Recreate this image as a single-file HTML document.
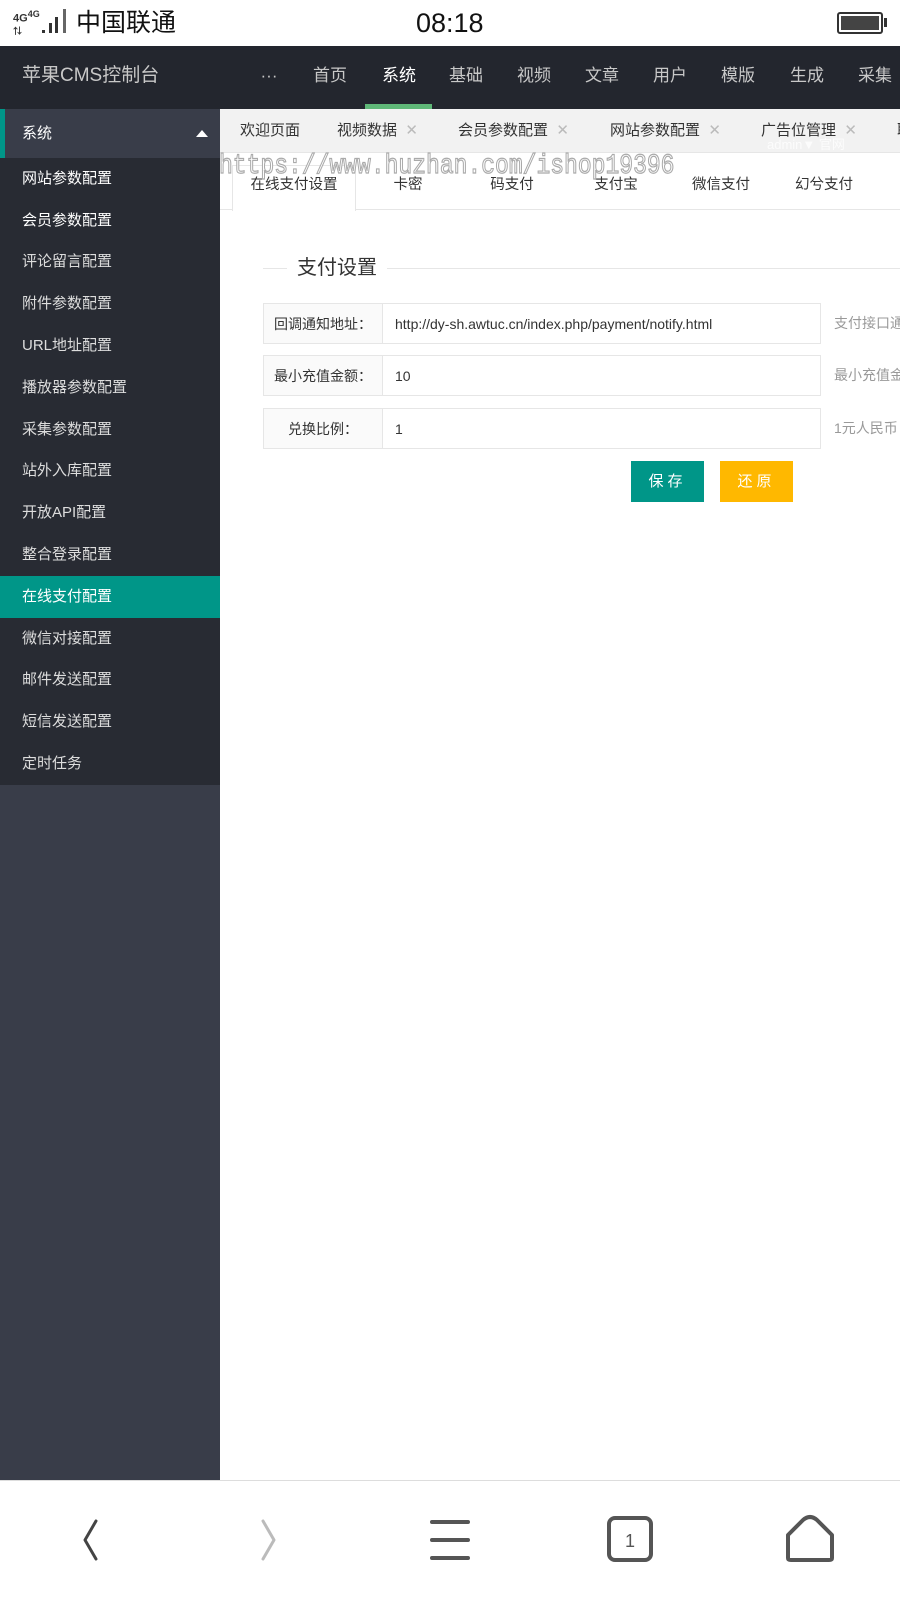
<!DOCTYPE html>
<html><head><meta charset="utf-8">
<style>
*{margin:0;padding:0;box-sizing:border-box}
body{width:900px;height:1600px;overflow:hidden;background:#fff;font-family:"Liberation Sans","Noto Sans CJK SC",sans-serif;position:relative}
.a{position:absolute;white-space:nowrap}
.nav{top:46px;left:0;width:900px;height:63px;background:#23262e}
.nv{top:46px;height:63px;line-height:60px;font-size:17px;color:#c8c8c8;transform:translateX(-50%)}
.side{top:109px;left:0;width:220px;height:1371px;background:#393d49}
.si{left:0;width:220px;height:42px;line-height:42px;padding-left:22px;font-size:15px;color:#ddd;background:#282b33}
.tab{top:109px;height:44px;line-height:44px;font-size:15px;color:#333}
.x{color:#bbb;font-size:15px}
.st{top:161px;height:49px;line-height:49px;font-size:14.5px;color:#333;transform:translateX(-50%)}
.lb{left:263px;width:120px;height:41px;line-height:41px;background:#fafafa;border:1px solid #e6e6e6;font-size:14px;color:#333;text-align:center}
.in{left:382px;width:439px;height:41px;line-height:41px;border:1px solid #e6e6e6;padding-left:12px;font-size:14px;color:#333}
.hp{left:834px;font-size:14px;color:#999;line-height:41px}
</style></head><body>
<!-- status bar -->
<div class="a" style="left:13px;top:8px;font-size:11px;font-weight:bold;color:#333;line-height:12px">4G<sup style="font-size:9px">4G</sup><br><span style="font-size:9px">⇅</span></div>
<div class="a" style="left:42px;top:30px;width:3px;height:3px;background:#333"></div>
<div class="a" style="left:49px;top:23px;width:3px;height:10px;background:#333"></div>
<div class="a" style="left:55px;top:17px;width:3px;height:16px;background:#333"></div>
<div class="a" style="left:63px;top:9px;width:3px;height:24px;background:#666"></div>
<div class="a" style="left:76px;top:6px;font-size:25px;color:#111;line-height:34px">中国联通</div>
<div class="a" style="left:416px;top:6px;font-size:27px;color:#111;line-height:34px">08:18</div>
<div class="a" style="left:837px;top:12px;width:46px;height:22px;border:2px solid #333;border-radius:3px;padding:2px"><div style="width:100%;height:100%;background:#444"></div></div>
<div class="a" style="left:884px;top:18px;width:3px;height:9px;background:#333"></div>
<!-- header -->
<div class="a nav"></div>
<div class="a" style="left:22px;top:46px;line-height:60px;font-size:19px;color:#c8c8c8">苹果CMS控制台</div>
<div class="a nv" style="left:269px">···</div>
<div class="a nv" style="left:330px">首页</div>
<div class="a nv" style="left:399px;color:#fff">系统</div>
<div class="a nv" style="left:466px">基础</div>
<div class="a nv" style="left:534px">视频</div>
<div class="a nv" style="left:602px">文章</div>
<div class="a nv" style="left:670px">用户</div>
<div class="a nv" style="left:738px">模版</div>
<div class="a nv" style="left:807px">生成</div>
<div class="a nv" style="left:875px">采集</div>
<div class="a" style="left:365px;top:104px;width:67px;height:5px;background:#5fb878"></div>
<!-- sidebar -->
<div class="a side"></div>
<div class="a" style="left:0;top:109px;width:220px;height:49px;background:#393d49;border-left:5px solid #009688;line-height:49px;padding-left:17px;font-size:15px;color:#fff">系统</div>
<div class="a" style="left:196px;top:130px;width:0;height:0;border-left:6px solid transparent;border-right:6px solid transparent;border-bottom:7px solid #fff"></div>
<div class="a si" style="top:158px;color:#fff">网站参数配置</div>
<div class="a si" style="top:200px;color:#fff">会员参数配置</div>
<div class="a si" style="top:241px">评论留言配置</div>
<div class="a si" style="top:283px">附件参数配置</div>
<div class="a si" style="top:325px">URL地址配置</div>
<div class="a si" style="top:367px">播放器参数配置</div>
<div class="a si" style="top:409px">采集参数配置</div>
<div class="a si" style="top:450px">站外入库配置</div>
<div class="a si" style="top:492px">开放API配置</div>
<div class="a si" style="top:534px">整合登录配置</div>
<div class="a si" style="top:576px;background:#009688;color:#fff">在线支付配置</div>
<div class="a si" style="top:618px">微信对接配置</div>
<div class="a si" style="top:659px">邮件发送配置</div>
<div class="a si" style="top:701px">短信发送配置</div>
<div class="a si" style="top:743px;height:42px">定时任务</div>
<!-- tab bar -->
<div class="a" style="left:220px;top:109px;width:680px;height:44px;background:#f2f2f2;border-bottom:1px solid #e6e6e6"></div>
<div class="a tab" style="left:240px">欢迎页面</div>
<div class="a tab" style="left:337px">视频数据 <span class="x">&nbsp;✕</span></div>
<div class="a tab" style="left:458px">会员参数配置 <span class="x">&nbsp;✕</span></div>
<div class="a tab" style="left:610px">网站参数配置 <span class="x">&nbsp;✕</span></div>
<div class="a tab" style="left:761px">广告位管理 <span class="x">&nbsp;✕</span></div>
<div class="a tab" style="left:897px">职</div>
<div class="a" style="left:767px;top:134px;font-size:13px;color:#fff;opacity:.8">admin▼ 官网</div>
<!-- sub tabs -->
<div class="a" style="left:220px;top:209px;width:680px;height:1px;background:#e6e6e6"></div>
<div class="a" style="left:232px;top:165px;width:124px;height:46px;background:#fff;border:1px solid #e6e6e6;border-bottom:none"></div>
<div class="a st" style="left:294px">在线支付设置</div>
<div class="a st" style="left:408px">卡密</div>
<div class="a st" style="left:512px">码支付</div>
<div class="a st" style="left:616px">支付宝</div>
<div class="a st" style="left:721px">微信支付</div>
<div class="a st" style="left:824px">幻兮支付</div>
<div class="a" style="left:219px;top:148px;font-family:'Liberation Mono',monospace;font-size:23px;line-height:30px;color:#fff;-webkit-text-stroke:1px #aaa;transform:scaleY(1.2);transform-origin:left top">https://www.huzhan.com/ishop19396</div>
<!-- fieldset -->
<div class="a" style="left:263px;top:268px;width:637px;height:1px;background:#e6e6e6"></div>
<div class="a" style="left:287px;top:254px;padding:0 10px;background:#fff;font-size:20px;color:#333;line-height:28px">支付设置</div>
<div class="a lb" style="top:303px">回调通知地址：</div>
<div class="a in" style="top:303px">http://dy-sh.awtuc.cn/index.php/payment/notify.html</div>
<div class="a hp" style="top:303px">支付接口通知</div>
<div class="a lb" style="top:355px">最小充值金额：</div>
<div class="a in" style="top:355px">10</div>
<div class="a hp" style="top:355px">最小充值金额</div>
<div class="a lb" style="top:408px">兑换比例：</div>
<div class="a in" style="top:408px">1</div>
<div class="a hp" style="top:408px">1元人民币</div>
<div class="a" style="left:631px;top:461px;width:73px;height:41px;background:#009688;color:#fff;font-size:15px;line-height:41px;text-align:center;letter-spacing:4px">保存</div>
<div class="a" style="left:720px;top:461px;width:73px;height:41px;background:#ffb800;color:#fff;font-size:15px;line-height:41px;text-align:center;letter-spacing:4px">还原</div>
<!-- bottom bar -->
<div class="a" style="left:0;top:1480px;width:900px;height:1px;background:#ddd"></div>
<svg class="a" style="left:0;top:1480px" width="900" height="120">
<path d="M96 41 L85 60 L96 79" stroke="#444" stroke-width="3" fill="none" stroke-linecap="round" stroke-linejoin="round"/>
<path d="M263 41 L274 60 L263 79" stroke="#bbb" stroke-width="3" fill="none" stroke-linecap="round" stroke-linejoin="round"/>
<path d="M432 42 H468 M432 60 H468 M432 78 H468" stroke="#555" stroke-width="4" stroke-linecap="round"/>
<rect x="609" y="38" width="42" height="42" rx="6" stroke="#555" stroke-width="4" fill="none"/>
<text x="630" y="67" font-size="18" fill="#555" text-anchor="middle" font-family="Liberation Sans">1</text>
<path d="M788 55 L803 40 Q810 34 817 40 L832 55 V78 Q832 80 829 80 H791 Q788 80 788 78 Z" stroke="#555" stroke-width="4" fill="none" stroke-linejoin="round"/>
</svg>
</body></html>
